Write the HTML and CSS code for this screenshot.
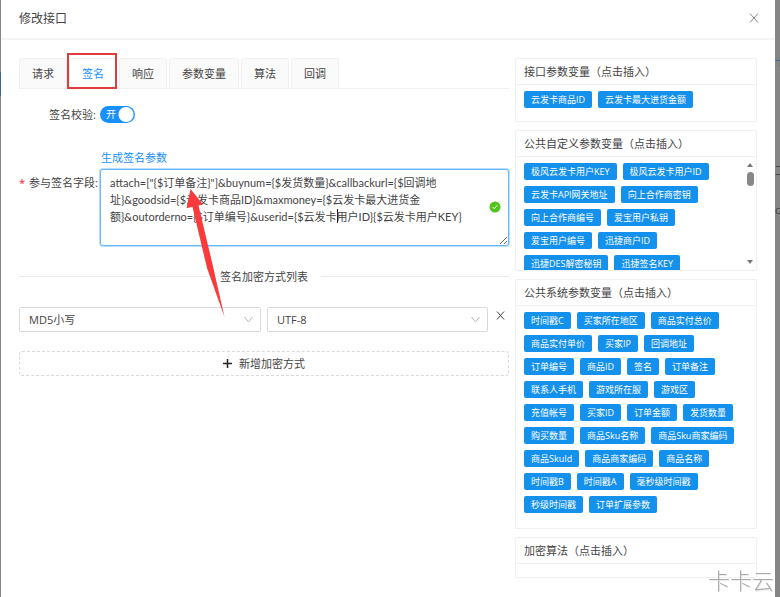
FILE: index.html
```html
<!DOCTYPE html>
<html lang="zh-CN">
<head>
<meta charset="utf-8">
<meta name="viewport" content="width=device-width, initial-scale=1">
<title>修改接口</title>
<link rel="stylesheet" href="styles.css">
</head>
<body>
<div class="backdrop" aria-hidden="true">
  <span class="behind behind-link">卡</span>
  <span class="behind behind-mark">工</span>
  <span class="behind behind-text">co</span>
  <span class="behind behind-button"></span>
</div>
<section class="modal" role="dialog" aria-labelledby="title">
  <header class="modal-head">
    <h1 id="title">修改接口</h1>
    <button class="close" type="button" aria-label="关闭"><svg width="10" height="12" viewBox="0 0 10 12"><path d="M1 1.5 9 10.5M9 1.5 1 10.5"/></svg></button>
  </header>
  <div class="modal-body">
    <main class="form">
      <nav class="tabs">
        <button class="tab" type="button">请求</button>
        <button class="tab active" type="button">签名<span class="highlight"></span></button>
        <button class="tab" type="button">响应</button>
        <button class="tab" type="button">参数变量</button>
        <button class="tab" type="button">算法</button>
        <button class="tab" type="button">回调</button>
      </nav>
      <div class="row">
        <label class="label" for="verify">签名校验:</label>
        <span class="switch"><input id="verify" type="checkbox" role="switch" checked><span class="switch-text">开</span></span>
      </div>
      <div class="row fields">
        <label class="label fields-label" for="fields"><span class="required">*</span>参与签名字段:</label>
        <div class="control">
          <a class="generate" href="#">生成签名参数</a>
          <div class="textbox">
            <textarea id="fields" spellcheck="false">attach=["{$订单备注}"]&amp;buynum={$发货数量}&amp;callbackurl={$回调地
址}&amp;goodsid={$云发卡商品ID}&amp;maxmoney={$云发卡最大进货金
额}&amp;outorderno={$订单编号}&amp;userid={$云发卡用户ID}{$云发卡用户KEY}</textarea>
            <span class="caret"></span>
            <svg class="valid" width="12" height="12" viewBox="0 0 12 12"><circle cx="6" cy="6" r="5.5"/><path d="m3.6 6 1.7 1.8 3-3.6"/></svg>
            <svg class="pointer" width="40" height="130" viewBox="0 0 40 130"><path d="M4.500 1 .5 20 6.500 19 21 80 38.500 129 26 74 12.500 17.500 17 16.500Z"/></svg>
          </div>
        </div>
      </div>
      <h2 class="divider">签名加密方式列表</h2>
      <div class="methods">
        <span class="select method"><select aria-label="加密方式"><option>MD5小写</option></select><svg width="9" height="7" viewBox="0 0 9 7"><path d="m.5 1 4 5 4-5"/></svg></span>
        <span class="select charset"><select aria-label="编码"><option>UTF-8</option></select><svg width="9" height="7" viewBox="0 0 9 7"><path d="m.5 1 4 5 4-5"/></svg></span>
        <button class="remove" type="button" aria-label="删除"><svg width="9" height="9" viewBox="0 0 9 9"><path d="m1 .5 7 8M8 .5l-7 8"/></svg></button>
      </div>
      <button class="add" type="button"><svg width="9" height="9" viewBox="0 0 9 9"><path d="M4.500 0v9M0 4.500h9"/></svg>新增加密方式</button>
    </main>
    <aside class="side">
      <section class="card">
        <h2>接口参数变量（点击插入）</h2>
        <div class="tags">
          <button type="button">云发卡商品ID</button><button type="button">云发卡最大进货金额</button>
        </div>
      </section>
      <section class="card custom">
        <h2>公共自定义参数变量（点击插入）</h2>
        <div class="tags">
          <button type="button">极风云发卡用户KEY</button><button type="button">极风云发卡用户ID</button><button type="button">云发卡API网关地址</button><button type="button">向上合作商密钥</button><button type="button">向上合作商编号</button><button type="button">爱宝用户私钥</button><button type="button">爱宝用户编号</button><button type="button">迅捷商户ID</button><button type="button">迅捷DES解密秘钥</button><button type="button">迅捷签名KEY</button>
        </div>
        <div class="scrollbar"><svg width="8" height="5" viewBox="0 0 8 5"><path d="M1 5 4 1l3 4Z"/></svg><i></i><svg class="down" width="8" height="5" viewBox="0 0 8 5"><path d="m1 0 3 4 3-4Z"/></svg></div>
      </section>
      <section class="card system">
        <h2>公共系统参数变量（点击插入）</h2>
        <div class="tags">
          <button type="button">时间戳C</button><button type="button">买家所在地区</button><button type="button">商品实付总价</button><button type="button">商品实付单价</button><button type="button">买家IP</button><button type="button">回调地址</button><button type="button">订单编号</button><button type="button">商品ID</button><button type="button">签名</button><button type="button">订单备注</button><button type="button">联系人手机</button><button type="button">游戏所在服</button><button type="button">游戏区</button><button type="button">充值帐号</button><button type="button">买家ID</button><button type="button">订单金额</button><button type="button">发货数量</button><button type="button">购买数量</button><button type="button">商品Sku名称</button><button type="button">商品Sku商家编码</button><button type="button">商品SkuId</button><button type="button">商品商家编码</button><button type="button">商品名称</button><button type="button">时间戳B</button><button type="button">时间戳A</button><button type="button">毫秒级时间戳</button><button type="button">秒级时间戳</button><button type="button">订单扩展参数</button>
        </div>
      </section>
      <section class="card">
        <h2>加密算法（点击插入）</h2>
        <div class="empty"></div>
      </section>
    </aside>
  </div>
</section>
<div class="watermark">卡卡云</div>
</body>
</html>
```
FILE: styles.css
```css
* { box-sizing: border-box; }
body {
  margin: 0;
  background: #858585;
  color: #444;
  font: 11px/17px "Open Sans", "Noto Sans CJK SC", sans-serif;
  overflow: hidden;
}
h1, h2 { margin: 0; font-weight: 400; }
button, select, textarea { font: inherit; color: inherit; margin: 0; }
button { cursor: pointer; }
svg { display: block; fill: none; stroke: currentColor; }

.backdrop { position: fixed; inset: 0; overflow: hidden; }
.behind { position: absolute; left: calc(100% - 5px); }
.behind-link { top: 53px; color: #215f9c; }
.behind-mark { top: 162px; color: #333; }
.behind-text { top: 201px; color: #444; }
.behind-button { left: 0; top: 72px; width: 1px; height: 24px; background: #3b629a; }

.modal { position: relative; min-height: 100vh; margin: 0 5px 0 1px; background: #fff; }
.modal-head {
  display: flex;
  align-items: center;
  justify-content: space-between;
  height: 40px;
  padding: 0 16px 2px 18px;
  border-bottom: 2px solid #f3f3f3;
}
.modal-head h1 { font-size: 12px; }
.close { padding: 0; border: 0; background: none; color: #888; }
.modal-body {
  display: grid;
  grid-template-columns: minmax(0, 1fr) 242px;
  gap: 6px;
  padding: 18px;
}

.tabs { display: flex; gap: 2px; height: 31px; border-bottom: 1px solid #f0f0f0; }
.tab {
  position: relative;
  padding: 0 12px;
  border: 1px solid #f1f1f1;
  border-bottom: 0;
  border-radius: 3px 3px 0 0;
  background: #fafafa;
}
.tab.active { background: #fff; color: #1890ff; }
.highlight { position: absolute; inset: -6px -1px -1px -3px; border: 2px solid #e03c3c; }

.row { display: flex; margin-top: 17px; }
.label { flex: none; width: 81px; padding-right: 4px; text-align: right; white-space: nowrap; }
.required { margin-right: 4px; color: #f5222d; }
.switch { position: relative; width: 35px; height: 17px; }
.switch input {
  display: block;
  width: 100%;
  height: 100%;
  margin: 0;
  appearance: none;
  border-radius: 9px;
  background: radial-gradient(circle at 26px 50%, #fff 7px, #1890ff 8px);
}
.switch-text { position: absolute; left: 6px; top: 0; color: #fff; font-size: 10px; pointer-events: none; }
.fields { margin-top: 26px; }
.fields-label { padding-top: 25px; }
.control { flex: 1; min-width: 0; }
.generate { display: block; margin-bottom: 3px; padding-left: 1px; color: #1890ff; text-decoration: none; }
.textbox { position: relative; }
.textbox textarea {
  display: block;
  width: 100%;
  height: 77px;
  padding: 4px 24px 4px 9px;
  border: 1px solid #69b7fb;
  border-radius: 3px;
  outline: 0;
  box-shadow: 0 0 0 1px #b8defd;
  font-family: Lato, "Noto Sans CJK SC", sans-serif;
  white-space: pre;
  overflow: hidden;
  resize: vertical;
}
.caret { position: absolute; left: 237px; top: 40px; width: 1px; height: 14px; background: #222; }
.valid { position: absolute; right: 8px; top: 32px; fill: #52c41a; stroke: none; }
.valid path { fill: none; stroke: #fff; }
.pointer { position: absolute; z-index: 1; left: 86px; top: 19px; fill: #fb3b3b; stroke: none; pointer-events: none; }

.divider { display: flex; align-items: center; gap: 13px; margin-top: 22px; font-size: 11px; }
.divider::before, .divider::after { content: ""; flex: 1; height: 1px; background: #ececec; }
.methods { display: flex; gap: 6px; margin-top: 22px; }
.select { position: relative; display: block; }
.method { flex: 242; }
.charset { flex: 221; }
.select select {
  display: block;
  width: 100%;
  height: 25px;
  padding: 0 9px;
  border: 1px solid #d9d9d9;
  border-radius: 2px;
  background: #fff;
  appearance: none;
}
.select svg { position: absolute; right: 8px; top: 9px; color: #bbb; pointer-events: none; }
.remove { width: 15px; height: 17px; padding: 0 0 0 2px; border: 0; background: none; }
.add {
  display: flex;
  align-items: center;
  justify-content: center;
  gap: 7px;
  width: 100%;
  height: 25px;
  margin-top: 19px;
  border: 1px dashed #d9d9d9;
  border-radius: 3px;
  background: #fff;
}
.add svg { stroke-width: 1.500; color: #222; }

.side { display: flex; flex-direction: column; gap: 8px; }
.card { position: relative; border: 1px solid #f0f0f0; border-radius: 2px; }
.card h2 { padding: 4px 8px; border-bottom: 1px solid #f0f0f0; font-size: 11px; line-height: 17px; }
.tags { display: flex; flex-wrap: wrap; align-content: flex-start; gap: 6px; padding: 6px 16px 13px 8px; }
.tags button {
  height: 17px;
  padding: 0 7px;
  border: 0;
  border-radius: 2px;
  background: #1490ed;
  color: #fff;
  font-size: 9px;
  line-height: 17px;
  white-space: nowrap;
}
.custom .tags { height: 113px; overflow: hidden; }
.system .tags { padding-bottom: 15px; }
.scrollbar {
  position: absolute;
  right: 2px;
  top: 31px;
  bottom: 5px;
  display: flex;
  flex-direction: column;
  align-items: center;
  gap: 5px;
}
.scrollbar svg { fill: #777; stroke: none; }
.scrollbar i { width: 7px; height: 14px; border-radius: 4px; background: #888; }
.scrollbar .down { margin-top: auto; }
.empty { height: 13px; }
.watermark {
  position: fixed;
  right: 6px;
  bottom: 3px;
  color: #aaa;
  font: 300 22px/30px "Noto Sans CJK SC", sans-serif;
  text-shadow: 1px 1px #eee;
  pointer-events: none;
}
```
